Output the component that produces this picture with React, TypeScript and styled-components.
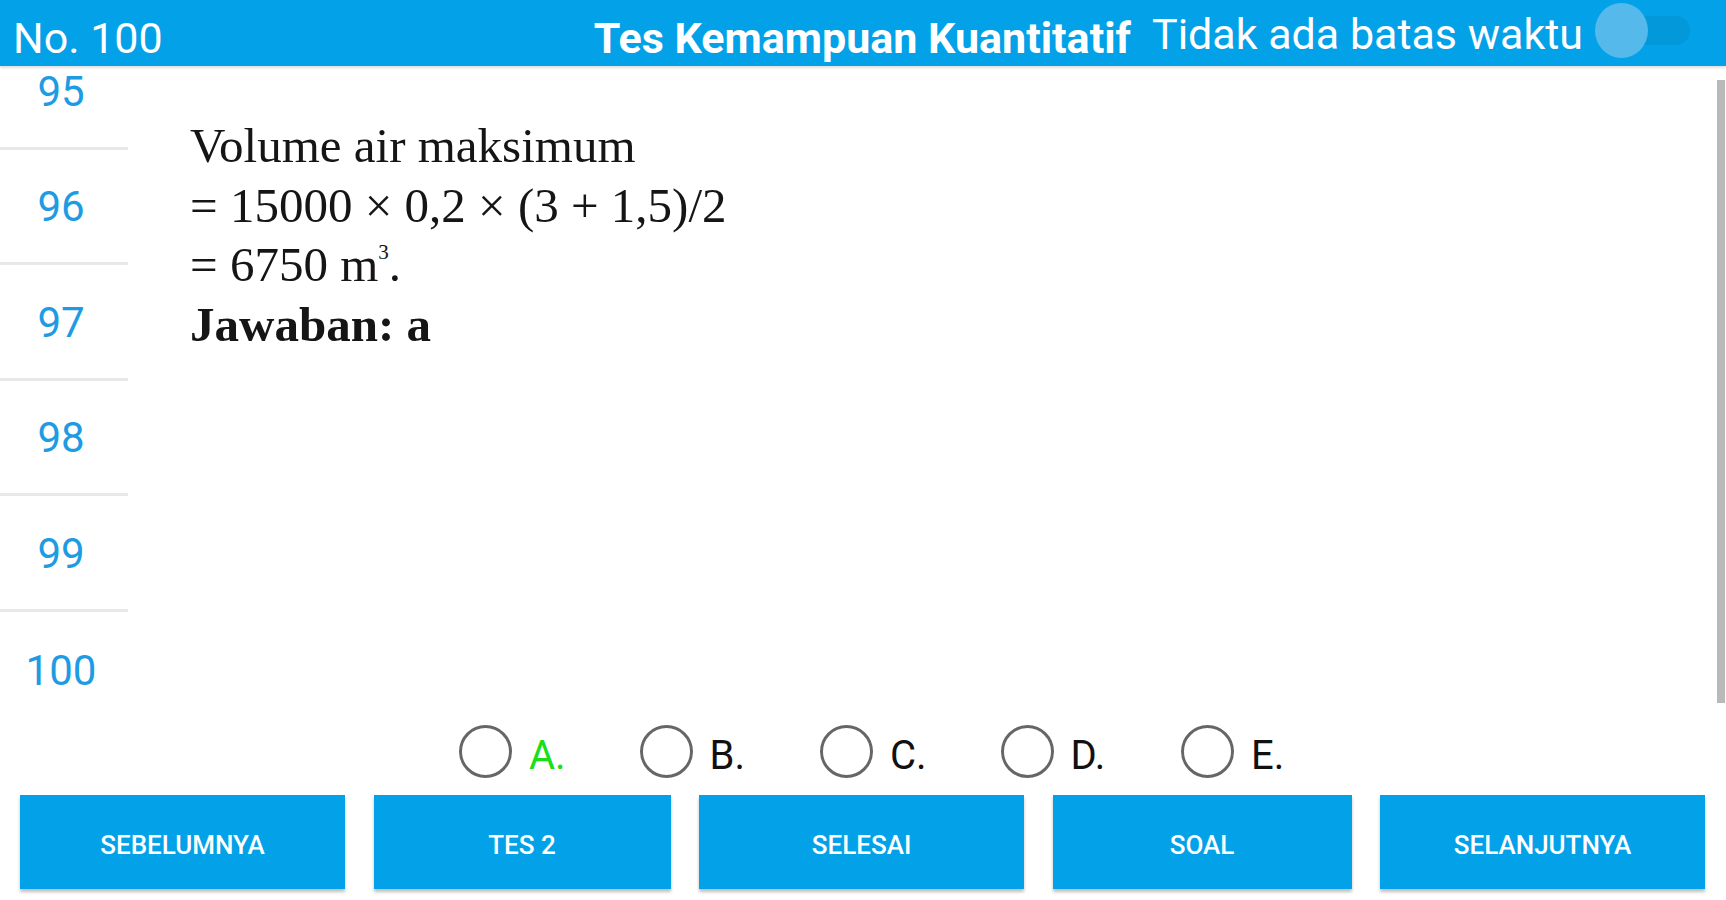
import styled, { createGlobalStyle } from "styled-components";

const BLUE = "#03a2e8";

const GlobalStyle = createGlobalStyle`
  html, body {
    margin: 0;
    padding: 0;
    background: #fff;
  }
  body {
    font-family: Roboto, "Noto Sans", sans-serif;
  }
  * {
    box-sizing: border-box;
  }
`;

const numbers = [95, 96, 97, 98, 99, 100];
const choices = ["A.", "B.", "C.", "D.", "E."];
const actions = ["Sebelumnya", "Tes 2", "Selesai", "Soal", "Selanjutnya"];

function App() {
    return (
        <Screen>
            <GlobalStyle />
            <TopBar>
                <BarText $top={13}>No. 100</BarText>
                <Spacer />
                <BarText $top={13} $bold>
                    Tes Kemampuan Kuantitatif
                </BarText>
                <BarText $top={9} $gap={21}>
                    Tidak ada batas waktu
                </BarText>
                <Switch>
                    <SwitchTrack />
                    <SwitchThumb />
                </Switch>
            </TopBar>

            <Body>
                <SideBar>
                    <NumberList>
                        {numbers.map((n, i) => (
                            <NumberRow key={n} $last={i === numbers.length - 1}>
                                {n}
                            </NumberRow>
                        ))}
                    </NumberList>
                </SideBar>
                <Article>
                    <Line>Volume air maksimum</Line>
                    <Line>= 15000 × 0,2 × (3 + 1,5)/2</Line>
                    <Line>
                        = 6750 m<Sup>3</Sup>.
                    </Line>
                    <Line $bold>Jawaban: a</Line>
                </Article>
                <ScrollRail>
                    <ScrollThumb />
                </ScrollRail>
            </Body>

            <Choices>
                {choices.map((c, i) => (
                    <Choice key={c}>
                        <RadioRing />
                        <ChoiceLabel $correct={i === 0}>{c}</ChoiceLabel>
                    </Choice>
                ))}
            </Choices>

            <ButtonBar>
                {actions.map((a) => (
                    <ActionButton key={a}>{a}</ActionButton>
                ))}
            </ButtonBar>
        </Screen>
    );
}

const Screen = styled.div`
    width: 1726px;
    height: 900px;
    display: flex;
    flex-direction: column;
    overflow: hidden;
    background: #fff;
`;

const TopBar = styled.header`
    position: relative;
    z-index: 2;
    flex: none;
    height: 66px;
    display: flex;
    align-items: flex-start;
    padding: 0 36px 0 13px;
    background: ${BLUE};
    color: #fff;
    box-shadow: 0 2px 2px rgba(0, 0, 0, 0.12);
`;

const BarText = styled.span<{ $top: number; $bold?: boolean; $gap?: number }>`
    padding-top: ${(p) => p.$top}px;
    margin-left: ${(p) => p.$gap ?? 0}px;
    font-size: 43px;
    line-height: 50px;
    font-weight: ${(p) => (p.$bold ? 700 : 400)};
    white-space: nowrap;
`;

const Spacer = styled.div`
    flex: 1;
`;

const Switch = styled.div`
    position: relative;
    flex: none;
    width: 95px;
    height: 55px;
    margin: 3px 0 0 12px;
`;

const SwitchTrack = styled.div`
    position: absolute;
    left: 26px;
    right: 0;
    top: 13px;
    height: 29px;
    border-radius: 15px;
    background: rgba(0, 0, 0, 0.06);
`;

const SwitchThumb = styled.div`
    position: absolute;
    left: 0;
    top: 0;
    width: 53px;
    height: 55px;
    border-radius: 50%;
    background: #55b9ec;
`;

const Body = styled.div`
    flex: none;
    height: 649px;
    display: flex;
`;

const SideBar = styled.nav`
    flex: none;
    width: 128px;
    overflow: hidden;
`;

const NumberList = styled.div`
    margin-top: -32px;
`;

const NumberRow = styled.div<{ $last?: boolean }>`
    height: 115.5px;
    display: flex;
    align-items: center;
    justify-content: center;
    padding: 2px 6px 0 0;
    border-bottom: ${(p) => (p.$last ? "none" : "3px solid #e8e8e8")};
    color: #1d9be3;
    font-size: 42px;
`;

const Article = styled.div`
    flex: 1;
    padding: 50px 0 0 62px;
    font-family: "Liberation Serif", "Times New Roman", serif;
    font-size: 49px;
    line-height: 59.5px;
    color: #151515;
`;

const Line = styled.div<{ $bold?: boolean }>`
    font-weight: ${(p) => (p.$bold ? 700 : 400)};
    white-space: nowrap;
`;

const Sup = styled.sup`
    font-size: 21px;
    line-height: 0;
    vertical-align: 22px;
`;

const ScrollRail = styled.div`
    flex: none;
    width: 11px;
    display: flex;
    padding: 14px 1px 12px 2px;
`;

const ScrollThumb = styled.div`
    flex: 1;
    background: #b9b9b9;
`;

const Choices = styled.div`
    flex: none;
    height: 73px;
    display: flex;
    align-items: center;
    padding-left: 459px;
`;

const Choice = styled.label`
    flex: none;
    width: 180.5px;
    display: flex;
    align-items: center;
    gap: 17px;
`;

const RadioRing = styled.span`
    flex: none;
    width: 53px;
    height: 53px;
    border: 3.5px solid #666;
    border-radius: 50%;
`;

const ChoiceLabel = styled.span<{ $correct?: boolean }>`
    padding-top: 8px;
    font-size: 40px;
    line-height: 40px;
    color: ${(p) => (p.$correct ? "#18e018" : "#111")};
`;

const ButtonBar = styled.div`
    flex: none;
    display: grid;
    grid-template-columns: 325px 297px 325px 299px 325px;
    column-gap: 28.5px;
    padding: 7px 0 0 20px;
`;

const ActionButton = styled.button`
    height: 94px;
    display: flex;
    align-items: center;
    justify-content: center;
    padding: 6px 0 0;
    border: none;
    border-radius: 0;
    background: ${BLUE};
    box-shadow: 0 3px 3px rgba(0, 0, 0, 0.25);
    color: #fff;
    font-family: Roboto, "Noto Sans", sans-serif;
    font-size: 26px;
    font-weight: 500;
    text-transform: uppercase;
`;

export default App;
